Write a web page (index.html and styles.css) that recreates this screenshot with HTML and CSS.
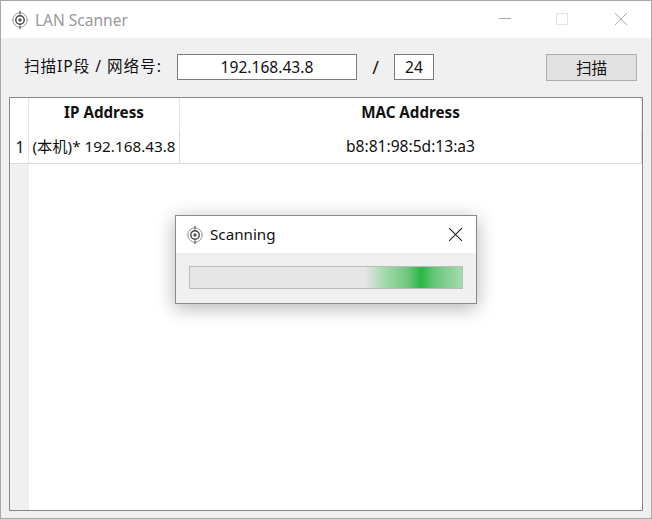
FILE: index.html
```html
<!DOCTYPE html>
<html lang="zh">
<head>
<meta charset="utf-8">
<title>LAN Scanner</title>
<link rel="stylesheet" href="styles.css">
</head>
<body>
<div class="window">
  <header class="titlebar">
    <svg class="app-icon" viewBox="0 0 18 18"><circle cx="9" cy="9" r="7.2" fill="none" stroke="#999" stroke-width="1"/><circle cx="9" cy="9" r="4.2" fill="none" stroke="#444" stroke-width="1.4"/><circle cx="9" cy="9" r="1.7" fill="#555"/><path d="M9 0v3.5M9 14.5V18" stroke="#555" stroke-width="1.2"/><path d="M1 9h2M15 9h2" stroke="#aaa" stroke-width="1"/></svg>
    <span class="title">LAN Scanner</span>
    <div class="controls">
      <svg class="ctl" viewBox="0 0 12 12"><path d="M0 5.5h12" stroke="#aaa" stroke-width="1"/></svg>
      <svg class="ctl ctl-max" viewBox="0 0 12 12"><rect x="0.5" y="0.5" width="11" height="11" fill="none" stroke="#e4e4e4"/></svg>
      <svg class="ctl" viewBox="0 0 12 12"><path d="M0 0l12 12M12 0L0 12" stroke="#aaa" stroke-width="1"/></svg>
    </div>
  </header>
  <main class="content">
    <div class="toolbar">
      <label class="label">扫描IP段 / 网络号:</label>
      <div class="field field-ip">192.168.43.8</div>
      <span class="slash">/</span>
      <div class="field field-mask">24</div>
      <button class="scan-btn">扫描</button>
    </div>
    <div class="table">
      <div class="table-head">
        <div class="corner"></div>
        <div class="th th-ip">IP Address</div>
        <div class="th th-mac">MAC Address</div>
      </div>
      <div class="row">
        <div class="rownum">1</div>
        <div class="td td-ip">(本机)* 192.168.43.8</div>
        <div class="td td-mac">b8:81:98:5d:13:a3</div>
      </div>
      <div class="filler"><div class="gutter"></div></div>
    </div>
  </main>
  <div class="dialog">
    <div class="dialog-title">
      <svg class="app-icon" viewBox="0 0 18 18"><circle cx="9" cy="9" r="7.2" fill="none" stroke="#999" stroke-width="1"/><circle cx="9" cy="9" r="4.2" fill="none" stroke="#444" stroke-width="1.4"/><circle cx="9" cy="9" r="1.7" fill="#555"/><path d="M9 0v3.5M9 14.5V18" stroke="#555" stroke-width="1.2"/><path d="M1 9h2M15 9h2" stroke="#aaa" stroke-width="1"/></svg>
      <span class="dialog-name">Scanning</span>
      <svg class="dialog-close" viewBox="0 0 12 12"><path d="M0 0l12 12M12 0L0 12" stroke="#222" stroke-width="1"/></svg>
    </div>
    <div class="dialog-body">
      <div class="progress"><div class="progress-glow"></div></div>
    </div>
  </div>
</div>
</body>
</html>
```
FILE: styles.css
```css
* { box-sizing: border-box; }
html, body { margin: 0; padding: 0; }
body {
  width: 652px;
  height: 519px;
  overflow: hidden;
  font-family: "Noto Sans", "Noto Sans CJK SC", sans-serif;
  font-size: 15.6px;
  color: #111;
}
.window {
  position: relative;
  width: 652px;
  height: 519px;
  border: 1px solid #a8a8a8;
  background: #f0f0f0;
  display: flex;
  flex-direction: column;
}
.titlebar {
  height: 37px;
  flex: none;
  background: #fff;
  display: flex;
  align-items: center;
  padding-left: 10px;
}
.app-icon { width: 18px; height: 18px; flex: none; }
.title { margin-left: 6px; font-size: 15.5px; color: #999; }
.controls {
  margin-left: auto;
  display: flex;
  gap: 46px;
  padding-right: 24px;
  padding-bottom: 2px;
}
.ctl { width: 12px; height: 12px; display: block; }
.ctl-max { margin-left: -1px; margin-right: 1px; }
.content {
  flex: 1;
  display: flex;
  flex-direction: column;
  padding: 16px 8px 7px;
  min-height: 0;
}
.toolbar {
  height: 27px;
  display: flex;
  align-items: flex-start;
  padding-left: 15px;
  flex: none;
}
.label {
  width: 153px;
  font-size: 15.6px;
  line-height: 25px;
  letter-spacing: 0.95px;
  white-space: nowrap;
}
.field {
  height: 26px;
  border: 1px solid #7a7a7a;
  background: #fff;
  display: flex;
  align-items: center;
  justify-content: center;
}
.field-ip { width: 180px; }
.slash { width: 37px; text-align: center; font-size: 18px; line-height: 26px; }
.field-mask { width: 40px; }
.scan-btn {
  margin-left: 112px;
  width: 91px;
  height: 27px;
  border: 1px solid #adadad;
  background: #e1e1e1;
  font: inherit;
  color: #111;
  padding: 0;
}
.table {
  margin-top: 16px;
  flex: 1;
  border: 1px solid #828790;
  background: #fff;
  display: flex;
  flex-direction: column;
  min-height: 0;
}
.table-head, .row { display: grid; grid-template-columns: 18px 152px 462px; flex: none; }
.table-head { height: 33px; }
.th {
  font-weight: 700;
  font-size: 15.2px;
  text-align: center;
  line-height: 29px;
  border-right: 1px solid #e6e6e6;
}
.row { height: 33px; border-bottom: 1px solid #d8d8d8; }
.rownum { text-align: center; line-height: 32px; padding-left: 2px; }
.td {
  text-align: center;
  line-height: 30px;
  white-space: nowrap;
  border-right: 1px solid #d8d8d8;
}
.td-ip { border-left: 1px solid #e6e6e6; font-size: 15.3px; }
.th-ip { border-left: 1px solid #e6e6e6; }
.filler { flex: 1; display: flex; }
.gutter { width: 19px; background: #f0f0f0; }
.dialog {
  position: absolute;
  left: 174px;
  top: 214px;
  width: 302px;
  height: 89px;
  border: 1px solid #8a8a8a;
  background: #f0f0f0;
  box-shadow: 0 4px 18px rgba(0, 0, 0, 0.3);
}
.dialog-title {
  height: 37px;
  background: #fff;
  display: flex;
  align-items: center;
  padding-left: 10px;
}
.dialog-name { margin-left: 6px; font-size: 15.2px; color: #111; padding-bottom: 1px; }
.dialog-close { width: 13px; height: 13px; margin-left: auto; margin-right: 14px; }
.dialog-body { padding: 13px 13px 0; }
.progress {
  height: 23px;
  border: 1px solid #bcbcbc;
  background: #e6e6e6;
  overflow: hidden;
}
.progress-glow {
  margin-left: 175px;
  height: 100%;
  background: linear-gradient(90deg, #e6e6e6 0%, #a8dbb0 18%, #6cc67c 45%, #26b840 58%, #63c576 70%, #a6dbae 100%);
}
```
